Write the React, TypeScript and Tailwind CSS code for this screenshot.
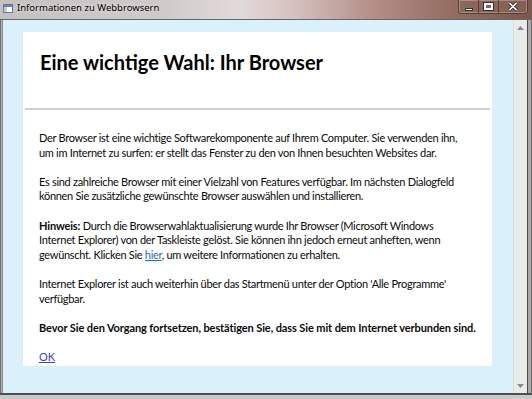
import React from "react";

const body = "font-['Lato','Open_Sans',sans-serif]";

export default function App() {
  return (
    <div className="w-[532px] h-[399px] overflow-hidden flex flex-col bg-[#8d8a8a]">
      {/* Title bar */}
      <div className="h-[19px] shrink-0 flex items-start bg-[linear-gradient(90deg,#c6c1c1_0%,#cfc9c8_30%,#e2dada_45%,#d6c2bf_55%,#b48f88_70%,#936d62_85%,#7a584e_100%)]">
        <div className="ml-[3px] mt-[4px] w-[10px] h-[9px] border border-[#6a7a90] bg-white flex flex-col">
          <div className="h-[2px] bg-[#5b86c4]" />
          <div className="flex-1 flex">
            <div className="w-[3px] bg-[#b8cbe4]" />
          </div>
        </div>
        <div className="ml-[4px] mt-[2px] text-[9.5px] leading-[12px] text-black font-['Noto_Sans',sans-serif] [text-shadow:0_0_4px_rgba(255,255,255,0.9)]">
          Informationen zu Webbrowsern
        </div>
        <div className="flex-1" />
        <div className="mr-[4px] -mt-[1px] h-[15px] w-[70px] rounded-b-[3px] border border-[#5a3e36] bg-[#8a6559]/60 flex items-center shadow-[inset_0_0_0_1px_rgba(255,255,255,0.25)]">
          <div className="w-[20px] h-full flex items-center justify-center border-r border-[#5a3e36]">
            <div className="mt-[5px] w-[8px] h-[3px] bg-white border border-[#333]" />
          </div>
          <div className="w-[20px] h-full flex items-center justify-center border-r border-[#5a3e36]">
            <div className="w-[9px] h-[7px] border-[2px] border-white outline outline-1 outline-[#333]" />
          </div>
          <div className="flex-1 h-full flex items-center justify-center">
            <svg width="10" height="9" viewBox="0 0 10 9">
              <path d="M1.5 1 L8.5 8 M8.5 1 L1.5 8" stroke="#333" strokeWidth="3.2" />
              <path d="M1.5 1 L8.5 8 M8.5 1 L1.5 8" stroke="#fff" strokeWidth="1.6" />
            </svg>
          </div>
        </div>
      </div>

      {/* Main row */}
      <div className="flex-1 flex min-h-0 border-t border-[#5e6a72]">
        <div className="w-[2px] bg-[#b4b2b2] border-l border-[#6f6f6f]" />
        <div className="flex-1 bg-[#daf1fc] border-l border-[#8c8c8c] pt-[12px] pl-[20px]">
          <div className={`w-[469px] h-[334px] bg-white pt-[18px] ${body}`}>
            <h1 className="pl-[17px] text-[20px] leading-[24px] font-bold text-black whitespace-nowrap">
              Eine wichtige Wahl: Ihr Browser
            </h1>
            <div className="mt-[34px] mx-[2px] h-[2px] bg-[#cfcfcf]" />
            <div className="mt-[21px] pl-[16px] text-[11px] tracking-[-0.3px] leading-[14.6px] text-[#0a0a0a] whitespace-nowrap">
              <p className="mb-[14.6px]">
                Der Browser ist eine wichtige Softwarekomponente auf Ihrem Computer. Sie verwenden ihn,
                <br />
                um im Internet zu surfen: er stellt das Fenster zu den von Ihnen besuchten Websites dar.
              </p>
              <p className="mb-[14.6px]">
                Es sind zahlreiche Browser mit einer Vielzahl von Features verfügbar. Im nächsten Dialogfeld
                <br />
                können Sie zusätzliche gewünschte Browser auswählen und installieren.
              </p>
              <p className="mb-[14.6px]">
                <b className="tracking-[-0.15px]">Hinweis:</b> Durch die Browserwahlaktualisierung wurde Ihr Browser (Microsoft Windows
                <br />
                Internet Explorer) von der Taskleiste gelöst. Sie können ihn jedoch erneut anheften, wenn
                <br />
                gewünscht. Klicken Sie <span className="text-[#1f6fd0] underline">hier</span>, um weitere Informationen zu erhalten.
              </p>
              <p className="mb-[14.6px]">
                Internet Explorer ist auch weiterhin über das Startmenü unter der Option 'Alle Programme'
                <br />
                verfügbar.
              </p>
              <p className="mb-[14.6px] font-bold tracking-[-0.1px]">
                Bevor Sie den Vorgang fortsetzen, bestätigen Sie, dass Sie mit dem Internet verbunden sind.
              </p>
              <p className="text-[#3d3df0] underline tracking-normal">OK</p>
            </div>
          </div>
        </div>
        <div className="w-[14px] bg-[#ebebeb] border-l border-[#dcdcdc] flex flex-col items-center justify-between pt-[6px] pb-[5px]">
          <svg width="7" height="4" viewBox="0 0 7 4"><path d="M0 4 L3.5 0 L7 4 Z" fill="#8a8a8a" /></svg>
          <svg width="7" height="4" viewBox="0 0 7 4"><path d="M0 0 L3.5 4 L7 0 Z" fill="#8a8a8a" /></svg>
        </div>
        <div className="w-[5px] bg-[#a9a7a7] border-l border-[#4a4a4a] border-r border-r-[#6a6a6a]" />
      </div>
      <div className="h-[6px] shrink-0 bg-[#c9c9c9] border-t-2 border-[#4e4e4e]" />
    </div>
  );
}
